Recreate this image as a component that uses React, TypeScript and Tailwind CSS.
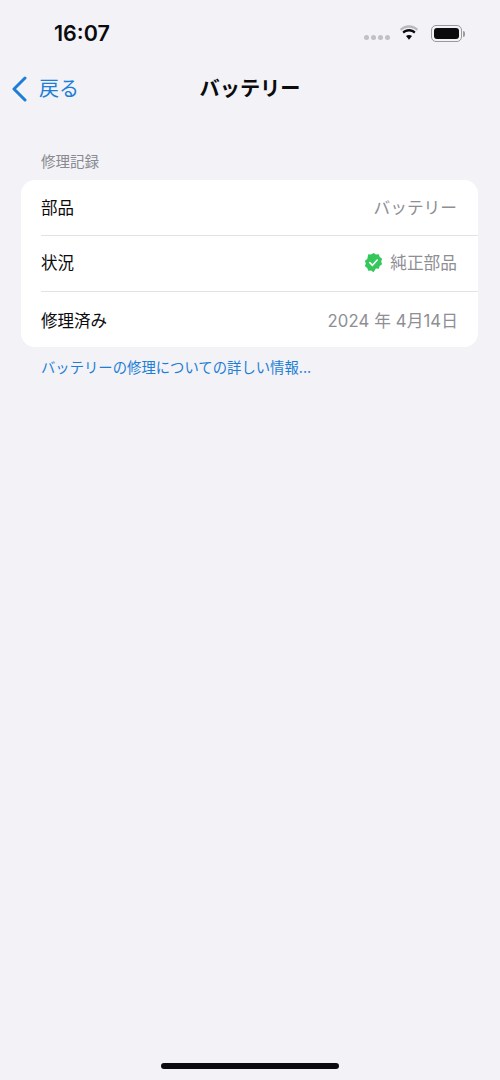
import React from 'react';

const FONT = '"Inter", "Noto Sans CJK JP", sans-serif';

const Wifi = () => (
  <svg width="20" height="16" viewBox="0 0 18 14" fill="#0b0b0d">
    <path d="M9 2.2c2.700 0 5.100 1 6.900 2.700l1.300-1.500C15.100 1.300 12.200 0 9 0S2.900 1.300.8 3.400l1.300 1.500C3.900 3.200 6.300 2.200 9 2.200z" fill="#b9b9bd" />
    <path d="M9 5.600c1.800 0 3.400.7 4.600 1.800l1.300-1.500C13.300 4.400 11.300 3.500 9 3.500s-4.300.9-5.900 2.400l1.300 1.500C5.600 6.300 7.200 5.600 9 5.600z" />
    <path d="M9 8.800c-1 0-2 .4-2.700 1l2.700 3.200 2.700-3.200c-.7-.6-1.700-1-2.700-1z" />
  </svg>
);

const Battery = () => (
  <div className="flex items-center gap-[1px]">
    <div className="w-[31px] h-[17px] rounded-[5px] border border-[#9a9a9e] p-[2px]">
      <div className="w-full h-full rounded-[3px] bg-[#0b0b0d]" />
    </div>
    <div className="w-[2px] h-[6px] rounded-r-sm bg-[#9a9a9e]" />
  </div>
);

const VerifiedBadge = () => (
  <svg width="21" height="21" viewBox="0 0 24 24">
    <path
      fill="#34c759"
      d="M12 1l2.700 1.900 3.300-.2 1.100 3.100 2.700 1.900-1 3.200 1 3.200-2.700 1.900-1.100 3.100-3.300-.2L12 23l-2.700-1.900-3.300.2-1.100-3.100-2.700-1.900 1-3.200-1-3.200 2.700-1.900L6 2.700l3.300.2z"
    />
    <path d="M7.800 12.200l3 3 5.400-6" fill="none" stroke="#fff" strokeWidth="1.900" strokeLinecap="round" strokeLinejoin="round" />
  </svg>
);

const Row: React.FC<{ label: string; children: React.ReactNode; className: string }> = ({ label, children, className }) => (
  <div className={`flex items-center justify-between ${className}`}>
    <span className="text-[16.500px] leading-[24px] text-[#0b0b0d]">{label}</span>
    <span className="mr-[21px] flex items-center text-[16.700px] leading-[24px] text-[#8e8e93]">{children}</span>
  </div>
);

export default function App() {
  return (
    <div className="w-[500px] h-[1080px] bg-[#f2f2f7] flex flex-col" style={{ fontFamily: FONT }}>
      {/* status bar */}
      <div className="h-[66px] flex items-start justify-between pl-[54px] pr-[35px] pt-[20px]">
        <span className="text-[21.500px] leading-[26px] font-semibold text-[#0b0b0d]">16:07</span>
        <div className="flex items-start">
          <div className="flex gap-[2px] mr-[9px] mt-[15px]">
            <div className="w-[5px] h-[5px] rounded-full bg-[#c0c0c5]" />
            <div className="w-[5px] h-[5px] rounded-full bg-[#c0c0c5]" />
            <div className="w-[5px] h-[5px] rounded-full bg-[#c0c0c5]" />
            <div className="w-[5px] h-[5px] rounded-full bg-[#c0c0c5]" />
          </div>
          <div className="mr-[12px] mt-[5px]">
            <Wifi />
          </div>
          <div className="mt-[5px]">
            <Battery />
          </div>
        </div>
      </div>

      {/* nav bar */}
      <div className="h-[46px] grid grid-cols-3 items-center">
        <div className="flex items-center pl-[11px] text-[#1c7ed6]">
          <svg width="16" height="26" viewBox="0 0 16 26" fill="none" stroke="currentColor" strokeWidth="3" strokeLinecap="round" strokeLinejoin="round">
            <path d="M14 2L3 13l11 11" />
          </svg>
          <span className="ml-[12px] text-[20px]">戻る</span>
        </div>
        <div className="text-center whitespace-nowrap text-[20.200px] font-bold text-[#0b0b0d]">バッテリー</div>
      </div>

      {/* section */}
      <div className="pl-[21px] pr-[22px] pt-[40px]">
        <div className="pl-[20px] h-[28px] text-[14.500px] leading-[20px] text-[#8a8a8e]">修理記録</div>
        <div className="bg-white rounded-[14px] pl-[20px]">
          <Row label="部品" className="h-[56px] border-b border-[#e2e2e5]">
            バッテリー
          </Row>
          <Row label="状況" className="h-[56px] pb-[2px] border-b border-[#e2e2e5]">
            <span className="mr-[6px] flex">
              <VerifiedBadge />
            </span>
            純正部品
          </Row>
          <Row label="修理済み" className="h-[55px] pt-[2px]">
            <span className="tracking-[0.100px] -mr-[1px]">2024 年 4月14日</span>
          </Row>
        </div>
        <div className="pl-[20px] pt-[11px] text-[14.350px] leading-[20px] text-[#1c7ed6]">バッテリーの修理についての詳しい情報...</div>
      </div>

      {/* home indicator */}
      <div className="mt-auto mb-[11px] mx-auto w-[178px] h-[6px] rounded-full bg-[#0b0b0d]" />
    </div>
  );
}
